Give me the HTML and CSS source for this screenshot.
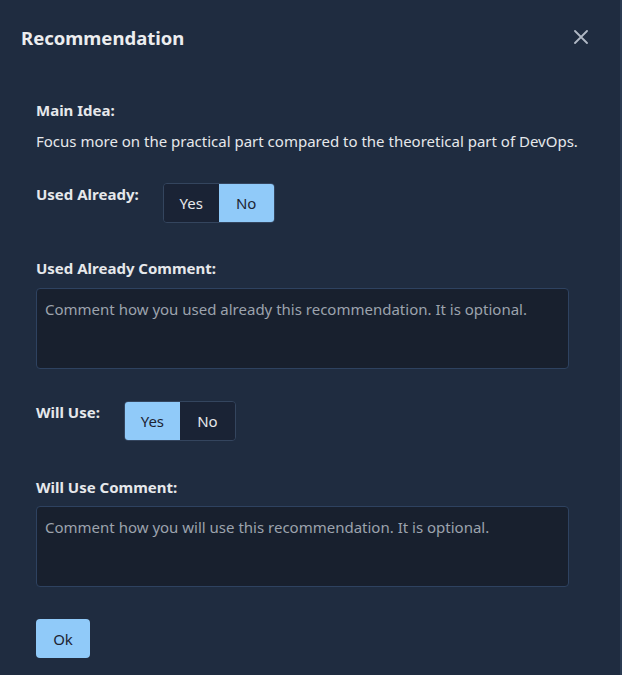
FILE: index.html
```html
<!DOCTYPE html>
<html>
<head>
<meta charset="utf-8">
<link rel="stylesheet" href="styles.css">
</head>
<body>
<div class="dialog">
  <div class="header">
    <h2 class="title">Recommendation</h2>
    <button class="close" aria-label="close">
      <svg width="14" height="14" viewBox="0 0 14 14"><path d="M1 1L13 13M13 1L1 13" stroke="#b0b8c4" stroke-width="1.8" stroke-linecap="round"/></svg>
    </button>
  </div>
  <div class="content">
    <div class="label">Main Idea:</div>
    <p class="text">Focus more on the practical part compared to the theoretical part of DevOps.</p>
    <div class="row row-used">
      <div class="label">Used Already:</div>
      <div class="toggle">
        <button class="opt">Yes</button>
        <button class="opt on">No</button>
      </div>
    </div>
    <div class="label label-comment">Used Already Comment:</div>
    <textarea class="area" placeholder="Comment how you used already this recommendation. It is optional."></textarea>
    <div class="row row-will">
      <div class="label">Will Use:</div>
      <div class="toggle">
        <button class="opt on">Yes</button>
        <button class="opt">No</button>
      </div>
    </div>
    <div class="label label-comment label-will">Will Use Comment:</div>
    <textarea class="area area-will" placeholder="Comment how you will use this recommendation. It is optional."></textarea>
    <button class="ok">Ok</button>
  </div>
</div>
</body>
</html>
```
FILE: styles.css
```css
html, body {
  margin: 0;
  padding: 0;
  background: #1f2c40;
}
body {
  font-family: "Noto Sans", "Open Sans", sans-serif;
  color: #e6e8eb;
}
.dialog {
  width: 620px;
  height: 675px;
  border-right: 2px solid #2b3b52;
  background: #1f2c40;
  box-sizing: content-box;
  overflow: hidden;
}
.header {
  display: flex;
  align-items: center;
  justify-content: space-between;
  padding: 22px 32px 0 21px;
  height: 30px;
}
.title {
  margin: 0;
  font-size: 18.5px;
  font-weight: 700;
  color: #ecedef;
}
.close {
  background: none;
  border: 0;
  padding: 0;
  width: 14px;
  height: 14px;
  display: flex;
}
.content {
  padding: 48px 20px 0 36px;
}
.label {
  font-size: 15px;
  font-weight: 700;
  color: #e6e8eb;
  line-height: 20px;
}
.text {
  margin: 10px 0 0;
  font-size: 15px;
  line-height: 22px;
  color: #e6e8eb;
  white-space: nowrap;
}
.row {
  display: flex;
  align-items: flex-start;
  gap: 24px;
}
.row .label { padding-top: 1px; }
.row-used { margin-top: 31px; }
.row-will { margin-top: 32px; }
.toggle {
  display: flex;
  border: 1px solid #34455e;
  border-radius: 4px;
  overflow: hidden;
  height: 38px;
}
.opt {
  font-family: inherit;
  font-size: 15px;
  border: 0;
  background: #1a2335;
  color: #e6e8eb;
  width: 55px;
  padding: 0;
}
.opt.on {
  background: #90caf9;
  color: #1d2433;
}
.label-comment { margin-top: 35px; }
.label-will { margin-top: 36px; }
.area {
  display: block;
  box-sizing: border-box;
  width: 533px;
  height: 81px;
  margin-top: 10px;
  background: #18202e;
  border: 1px solid #2e4260;
  border-radius: 4px;
  padding: 10px 8px;
  font-family: inherit;
  font-size: 15px;
  line-height: 21px;
  color: #e6e8eb;
  resize: none;
}
.area-will { margin-top: 9px; }
.area::placeholder { color: #9ca3ad; }
.ok {
  display: block;
  margin-top: 32px;
  width: 54px;
  height: 39px;
  border: 0;
  border-radius: 4px;
  background: #90caf9;
  color: #1d2433;
  font-family: inherit;
  font-size: 15px;
  padding: 0;
}
```
